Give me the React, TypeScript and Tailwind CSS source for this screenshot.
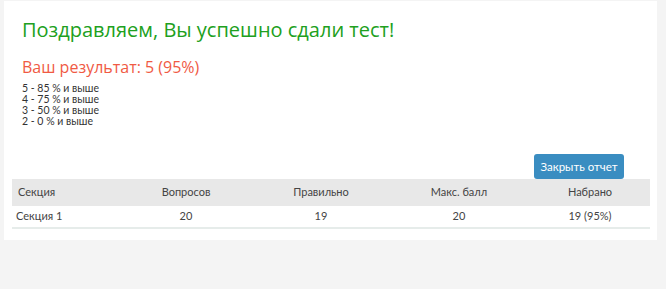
const grades = ['5 - 85 % и выше', '4 - 75 % и выше', '3 - 50 % и выше', '2 - 0 % и выше'];

const cols = [
  { label: 'Секция', w: 'w-[106px]', align: 'text-left pl-[6px]' },
  { label: 'Вопросов', w: 'w-[136px]', align: 'text-center' },
  { label: 'Правильно', w: 'w-[134px]', align: 'text-center' },
  { label: 'Макс. балл', w: 'w-[142px]', align: 'text-center' },
  { label: 'Набрано', w: 'w-[120px]', align: 'text-center' },
];

const row = ['Секция 1', '20', '19', '20', '19 (95%)'];

export default function App() {
  return (
    <div className="w-[666px] h-[289px] bg-[#f4f4f4] pt-px">
      <div className="ml-[4px] w-[653px] h-[239px] bg-white pt-[14px] px-[8px]">
        <div className="pl-[10px]">
          <h1 className="text-[20px] leading-[30px] text-[#20a020] font-['Open_Sans',sans-serif]">
            Поздравляем, Вы успешно сдали тест!
          </h1>
          <h2 className="mt-[11px] text-[16px] leading-[22px] text-[#f05a44] font-['Open_Sans',sans-serif]">
            Ваш результат: 5 (95%)
          </h2>
          <div className="mt-[5px] text-[10.5px] leading-[11px] text-[#333] font-['Lato',sans-serif]">
            {grades.map(g => (
              <div key={g}>{g}</div>
            ))}
          </div>
        </div>

        <div className="flex justify-end mt-[27px] pr-[25px]">
          <button className="w-[90px] h-[25px] rounded-[3px] bg-[#3a8dc1] text-white text-[11.5px] font-['Lato',sans-serif]">
            Закрыть отчет
          </button>
        </div>

        <div className="w-[638px] font-['Lato',sans-serif] text-[11px] text-[#444]">
          <div className="flex h-[27px] items-center bg-[#e8e8e8]">
            {cols.map(c => (
              <div key={c.label} className={`${c.w} ${c.align}`}>{c.label}</div>
            ))}
          </div>
          <div className="flex h-[23px] items-center border-b-2 border-[#e6ecea]">
            {row.map((v, i) => (
              <div key={i} className={`${cols[i].w} ${i === 0 ? 'text-left pl-[4px]' : 'text-center'}`}>{v}</div>
            ))}
          </div>
        </div>
      </div>
    </div>
  );
}
